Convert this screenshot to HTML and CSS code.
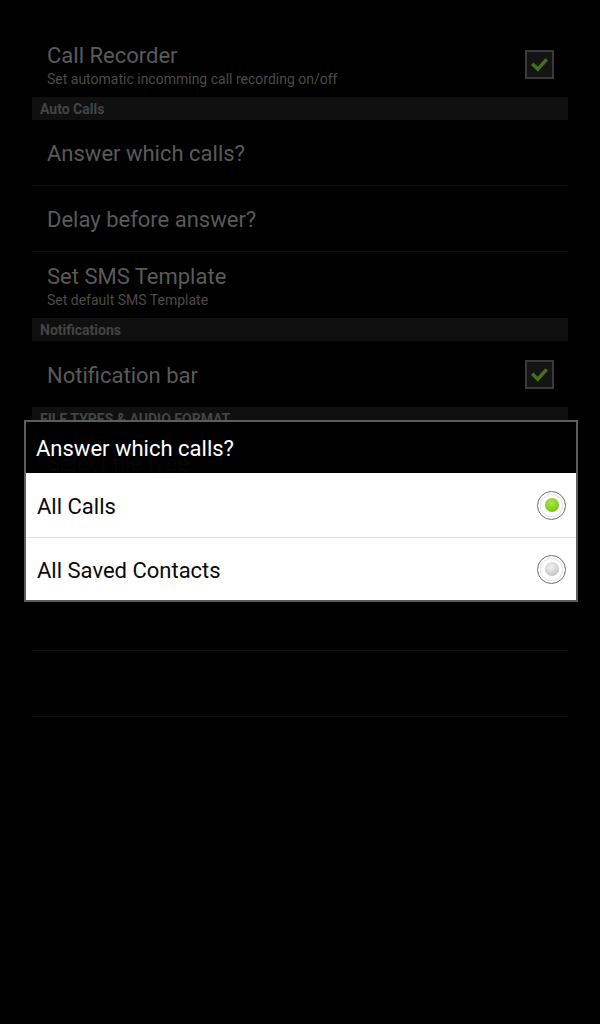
FILE: index.html
```html
<!DOCTYPE html>
<html lang="en">

<head>
    <meta charset="UTF-8">
    <meta name="viewport" content="width=device-width, initial-scale=1.0">
    <title>Call Recorder Settings</title>
    <link rel="stylesheet" href="styles.css">
</head>

<body>
    <div class="prefs">
        <div class="pref">
            <div class="pref-text">
                <div class="pref-title">Call Recorder</div>
                <div class="pref-summary">Set automatic incomming call recording on/off</div>
            </div>
            <span class="checkbox">
                <svg viewBox="0 0 29 29" width="25" height="25"><path d="M7.5 15 L12.5 20 L21.5 10" fill="none" stroke="#44701b" stroke-width="4" stroke-linecap="square"/></svg>
            </span>
        </div>

        <div class="category">Auto Calls</div>
        <div class="pref divided">
            <div class="pref-title">Answer which calls?</div>
        </div>
        <div class="pref divided">
            <div class="pref-title">Delay before answer?</div>
        </div>
        <div class="pref">
            <div class="pref-text">
                <div class="pref-title">Set SMS Template</div>
                <div class="pref-summary">Set default SMS Template</div>
            </div>
        </div>

        <div class="category">Notifications</div>
        <div class="pref">
            <div class="pref-title">Notification bar</div>
            <span class="checkbox">
                <svg viewBox="0 0 29 29" width="25" height="25"><path d="M7.5 15 L12.5 20 L21.5 10" fill="none" stroke="#44701b" stroke-width="4" stroke-linecap="square"/></svg>
            </span>
        </div>

        <div class="category">FILE TYPES &amp; AUDIO FORMAT</div>
        <div class="pref divided">
            <div class="pref-title">Select file type</div>
        </div>
        <div class="pref"></div>

        <div class="category"></div>
        <div class="pref divided"></div>
        <div class="pref divided"></div>
    </div>

    <!-- list dialog for "Answer which calls?" -->
    <div class="dialog">
        <div class="dialog-title">Answer which calls?</div>
        <div class="dialog-list">
            <div class="option">
                <span>All Calls</span>
                <span class="radio checked"></span>
            </div>
            <div class="option">
                <span>All Saved Contacts</span>
                <span class="radio"></span>
            </div>
        </div>
    </div>
</body>

</html>
```

FILE: styles.css
```css
body {
    margin: 0;
    background-color: #000;
    font-family: Roboto, "Noto Sans", sans-serif;
}

.prefs {
    padding: 31px 32px 0;
}

.pref {
    height: 66px;
    box-sizing: border-box;
    padding: 0 14px 0 15px;
    display: flex;
    align-items: center;
    justify-content: space-between;
}

.pref.divided {
    border-bottom: 1px solid #131313;
}

.pref-title {
    font-size: 22px;
    line-height: 26px;
    color: #5a5a5a;
    padding-top: 3px;
}

.pref-summary {
    font-size: 14px;
    line-height: 18px;
    color: #4b4b4b;
    margin-top: 1px;
}

.checkbox {
    width: 29px;
    height: 29px;
    box-sizing: border-box;
    border: 2px solid #3a3a3a;
    background-color: #141414;
    display: flex;
    align-items: center;
    justify-content: center;
}

.category {
    height: 23px;
    background-color: #101010;
    padding-left: 8px;
    font-size: 14px;
    font-weight: bold;
    line-height: 24px;
    color: #444;
    overflow: hidden;
}

.dialog {
    position: absolute;
    left: 24px;
    top: 420px;
    width: 554px;
    height: 182px;
    box-sizing: border-box;
    border: 2px solid #5c5c5c;
    display: flex;
    flex-direction: column;
}

.dialog-title {
    height: 51px;
    padding-left: 10px;
    background-color: rgba(0, 0, 0, 0.94);
    color: #fff;
    font-size: 22px;
    line-height: 54px;
}

.dialog-list {
    flex: 1;
    background-color: #fff;
}

.option {
    height: 64px;
    box-sizing: border-box;
    padding: 3px 10px 0 11px;
    display: flex;
    align-items: center;
    justify-content: space-between;
    font-size: 22px;
    color: #0a0a0a;
}

.option + .option {
    border-top: 1px solid #e3e3e3;
    height: 63px;
}

.radio {
    width: 29px;
    height: 29px;
    margin-top: -3px;
    box-sizing: border-box;
    border-radius: 50%;
    border: 1px solid #6e6e6e;
    background: radial-gradient(circle, #fff 0, #fff 10px, #e2e2e2 11px, #fff 12px);
    display: flex;
    align-items: center;
    justify-content: center;
}

.radio::after {
    content: "";
    width: 14px;
    height: 14px;
    border-radius: 50%;
    background: radial-gradient(circle at 45% 35%, #f2f2f2, #c8c8c8 70%, #b4b4b4);
}

.radio.checked::after {
    background: radial-gradient(circle at 45% 35%, #a8e84a, #7fcc1c 65%, #5ea811);
}
```
